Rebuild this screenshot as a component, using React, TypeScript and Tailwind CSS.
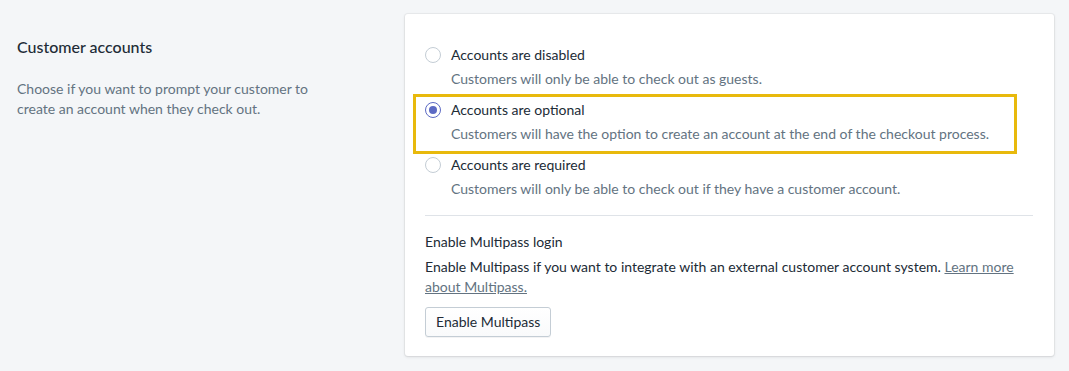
const options = [
  {
    id: 'disabled',
    label: 'Accounts are disabled',
    help: 'Customers will only be able to check out as guests.',
  },
  {
    id: 'optional',
    label: 'Accounts are optional',
    help: 'Customers will have the option to create an account at the end of the checkout process.',
  },
  {
    id: 'required',
    label: 'Accounts are required',
    help: 'Customers will only be able to check out if they have a customer account.',
  },
]

const Radio = ({ checked }: { checked: boolean }) => (
  <span
    className={
      checked
        ? 'flex h-4 w-4 shrink-0 items-center justify-center rounded-full border border-[#5c6ac4] bg-white'
        : 'flex h-4 w-4 shrink-0 items-center justify-center rounded-full border border-[#c4cdd5] bg-white'
    }
  >
    {checked ? <span className="h-2 w-2 rounded-full bg-[#5c6ac4]" /> : null}
  </span>
)

export default function App() {
  const selected = 'optional'

  return (
    <div
      className="flex h-[371px] w-[1069px] bg-[#f4f6f8] text-[14px] leading-5 text-[#212b36]"
      style={{ fontFamily: 'Lato, "Noto Sans", sans-serif' }}
    >
      <div className="w-[405px] shrink-0 pl-[17px] pt-[37px]">
        <h2 className="text-[16px] leading-5 font-medium">Customer accounts</h2>
        <p className="mt-[22px] w-[320px] text-[#637381]">
          Choose if you want to prompt your customer to create an account when they check out.
        </p>
      </div>

      <div className="mt-[14px] h-[342px] w-[649px] shrink-0 rounded-[3px] bg-white pl-5 pr-[21px] pt-[31px] shadow-[0_0_0_1px_rgba(63,63,68,0.05),0_1px_3px_0_rgba(63,63,68,0.15)]">
        <div className="flex flex-col gap-[11px]">
          {options.map((opt) => (
            <div key={opt.id} className="relative">
              {opt.id === selected ? (
                <div className="pointer-events-none absolute -top-[6px] -bottom-[10px] -left-[12px] right-[16px] border-[3px] border-[#e8b90c]" />
              ) : null}
              <label className="flex items-center gap-[10px]">
                <Radio checked={opt.id === selected} />
                <span>{opt.label}</span>
              </label>
              <p className="mt-1 pl-[26px] text-[#637381]">{opt.help}</p>
            </div>
          ))}
        </div>

        <div className="mt-4 border-t border-[#dfe3e8]" />

        <div className="pt-4">
          <p>Enable Multipass login</p>
          <p className="mt-[5px]">
            Enable Multipass if you want to integrate with an external customer account system.{' '}
            <a href="#" className="text-[#637381] underline">
              Learn more about Multipass.
            </a>
          </p>
          <button
            type="button"
            className="mt-[10px] h-[30px] rounded-[3px] border border-[#c4cdd5] bg-gradient-to-b from-white to-[#f9fafb] px-[10px] text-[#212b36] shadow-[0_1px_0_0_rgba(22,29,37,0.05)]"
          >
            Enable Multipass
          </button>
        </div>
      </div>
    </div>
  )
}
